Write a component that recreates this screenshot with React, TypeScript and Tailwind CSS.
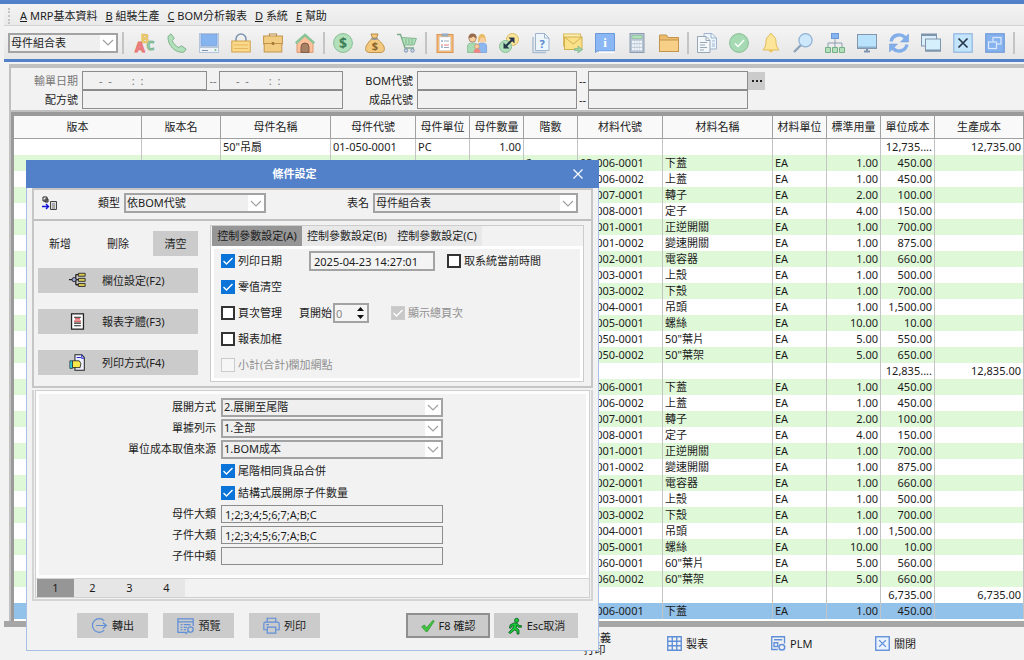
import { useState } from "react";
import type { ReactNode } from "react";

type Row = {
  name?: string;
  code?: string;
  unit?: string;
  qty?: string;
  level?: string;
  partCode?: string;
  partName?: string;
  partUnit?: string;
  usage?: string;
  unitCost?: string;
  total?: string;
};

const part = (partCode: string, partName: string, usage: string, unitCost: string): Row => ({
  level: "2",
  partCode,
  partName,
  partUnit: "EA",
  usage,
  unitCost,
});

const commonParts: Row[] = [
  part("03-006-0001", "下蓋", "1.00", "450.00"),
  part("03-006-0002", "上蓋", "1.00", "450.00"),
  part("03-007-0001", "轉子", "2.00", "100.00"),
  part("03-008-0001", "定子", "4.00", "150.00"),
  part("04-001-0001", "正逆開關", "1.00", "700.00"),
  part("04-001-0002", "變速開關", "1.00", "875.00"),
  part("04-002-0001", "電容器", "1.00", "660.00"),
  part("04-003-0001", "上殼", "1.00", "500.00"),
  part("04-003-0002", "下殼", "1.00", "700.00"),
  part("04-004-0001", "吊頭", "1.00", "1,500.00"),
  part("04-005-0001", "螺絲", "10.00", "10.00"),
];

const rows: Row[] = [
  { name: '50"吊扇', code: "01-050-0001", unit: "PC", qty: "1.00", unitCost: "12,735....", total: "12,735.00" },
  ...commonParts,
  part("03-050-0001", '50"葉片', "5.00", "550.00"),
  part("03-050-0002", '50"葉架', "5.00", "650.00"),
  { name: '60"吊扇', code: "01-060-0001", unit: "PC", qty: "1.00", unitCost: "12,835....", total: "12,835.00" },
  ...commonParts,
  part("03-060-0001", '60"葉片', "5.00", "560.00"),
  part("03-060-0002", '60"葉架', "5.00", "660.00"),
  { name: "馬達", code: "01-070-0001", unit: "PC", qty: "1.00", unitCost: "6,735.00", total: "6,735.00" },
  part("03-006-0001", "下蓋", "1.00", "450.00"),
];

const columns = [
  { label: "版本", w: "w-[128px]" },
  { label: "版本名", w: "w-[79px]" },
  { label: "母件名稱", w: "w-[110px]" },
  { label: "母件代號", w: "w-[85px]" },
  { label: "母件單位", w: "w-[54px]" },
  { label: "母件數量", w: "w-[54px]" },
  { label: "階數", w: "w-[54px]" },
  { label: "材料代號", w: "w-[85px]" },
  { label: "材料名稱", w: "w-[110px]" },
  { label: "材料單位", w: "w-[54px]" },
  { label: "標準用量", w: "w-[54px]" },
  { label: "單位成本", w: "w-[54px]" },
  { label: "生產成本", w: "" },
];

const menus = [
  ["A", "MRP基本資料"],
  ["B", "組裝生產"],
  ["C", "BOM分析報表"],
  ["D", "系統"],
  ["E", "幫助"],
];

const Svg = ({ children, size = "size-5" }: { children: ReactNode; size?: string }) => (
  <svg viewBox="0 0 20 20" className={`${size} shrink-0 overflow-visible`} fill="none" aria-hidden="true">
    {children}
  </svg>
);

const toolGroups: { label: string; icon: ReactNode }[][] = [
  [
    {
      label: "字型",
      icon: (
        <>
          <text x="6" y="9.500" fontSize="12" fontWeight="700" fill="#f7d77a" stroke="#d5ab42" strokeWidth=".6">B</text>
          <text x="11.500" y="17" fontSize="12" fontWeight="700" fill="#a5d8b0" stroke="#7fb58c" strokeWidth="1">C</text>
          <text x="0" y="19" fontSize="14" fontWeight="700" fill="#f08585" stroke="#e57373" strokeWidth="1">A</text>
        </>
      ),
    },
    {
      label: "電話",
      icon: <path d="M1 3.500 4 .8l3.200 4.400-2 2.400c1.200 3 3.400 5.400 6.600 7l2.600-1.800 4.800 3.200-2.400 3.200C8.500 20.400.5 12.500 1 3.500Z" fill="#b2e0bb" stroke="#76ae85" strokeWidth=".9" />,
    },
    {
      label: "電腦",
      icon: (
        <>
          <rect x=".5" y=".5" width="19" height="13" fill="#d7e2f0" stroke="#b6c6da" />
          <rect x="2" y="1.500" width="16" height="11" fill="#86b4f1" stroke="#6b98d8" strokeWidth=".6" />
          <rect x=".5" y="14.500" width="19" height="5" fill="#eef4fa" stroke="#b6c6da" />
          <path d="M3 17.500h6" stroke="#7f93aa" />
          <circle cx="16.500" cy="17" r="1" fill="#6bbb84" />
        </>
      ),
    },
    {
      label: "鎖定",
      icon: (
        <>
          <path d="M5 8.500V6a5 5 0 0 1 10 0v2.500" stroke="#7d93b0" strokeWidth="1.500" />
          <rect x=".8" y="8" width="18.400" height="11" fill="#fbd98b" stroke="#cfa14b" />
          <path d="M3 12h14M3 15.500h14" stroke="#e5b65c" />
        </>
      ),
    },
    {
      label: "公事包",
      icon: (
        <>
          <path d="M6.500 3V1h7v2" stroke="#b98a45" strokeWidth="1.200" />
          <rect x=".6" y="3" width="18.800" height="8" fill="#f2cc80" stroke="#c2944c" />
          <rect x="1.200" y="10.500" width="17.600" height="8.500" fill="#f2cc80" stroke="#c2944c" />
          <rect x="8.800" y="9" width="2.400" height="3" fill="#a97a38" />
        </>
      ),
    },
    {
      label: "首頁",
      icon: (
        <>
          <path d="M2 9v10.400h16V9L10 2.500Z" fill="#ffc19b" stroke="#d99a72" />
          <path d="M6 19.400V14a4 4 0 0 1 8 0v5.400Z" fill="#a88063" stroke="#805c45" />
          <path d="M.8 10.200 10 2l9.200 8.200" stroke="#8cc49a" strokeWidth="2.600" />
        </>
      ),
    },
  ],
  [
    {
      label: "收款",
      icon: (
        <>
          <circle cx="10" cy="10" r="9.400" fill="#b2e0bb" stroke="#86bd94" />
          <text x="10" y="15" fontSize="14" fontWeight="700" textAnchor="middle" fill="#3f7d57">$</text>
        </>
      ),
    },
    {
      label: "付款",
      icon: (
        <>
          <path d="M6 1h7l-1.500 4h-4Z" fill="#f3c97f" stroke="#b98a45" />
          <path d="M7 5.500h5c3 3 7.400 6.500 7.400 10 0 3-1.500 4-4.400 4H5c-3 0-4.500-1.500-4.400-4C.8 12 4 8.500 7 5.500Z" fill="#f3c97f" stroke="#c2944c" />
          <path d="M6 5.500c2.500 1.200 4.500 1.200 7 0" stroke="#8496ad" strokeWidth="1.200" />
          <text x="10" y="17" fontSize="11" fontWeight="700" textAnchor="middle" fill="#8a6329">$</text>
        </>
      ),
    },
    {
      label: "購物車",
      icon: (
        <>
          <path d="M0 1.500h3.500L8 15h9" stroke="#7aa887" strokeWidth="1.300" />
          <path d="M4.500 4.500 19.400 5.500 17 12H7.200Z" fill="#b2e0bb" stroke="#7fb58c" />
          <path d="M9 6v5M12 6v5M15 6v5" stroke="#7fb58c" />
          <circle cx="9" cy="17.500" r="1.700" fill="#cfdceb" stroke="#7d93b0" />
          <circle cx="15.500" cy="17.500" r="1.700" fill="#cfdceb" stroke="#7d93b0" />
        </>
      ),
    },
  ],
  [
    {
      label: "清單",
      icon: (
        <>
          <rect x="2" y="1.500" width="16" height="18" fill="#f7b978" stroke="#d99654" />
          <rect x="4.500" y="4" width="11" height="13.500" fill="#fff" stroke="#ccd5df" strokeWidth=".6" />
          <rect x="6.500" y=".5" width="7" height="3" fill="#9aabbd" />
          <path d="M6 8h2M6 14h2" stroke="#5d7fae" />
          <path d="M6 12h2m1 0h5" stroke="#e07878" />
          <path d="M9 8h5M9 14.500h5" stroke="#9aabbd" />
        </>
      ),
    },
    {
      label: "人員",
      icon: (
        <>
          <path d="M.5 19.500V13c0-2 1.500-3 5-3s5 1 5 3v6.500Z" fill="#a8dbb4" stroke="#7fb58c" strokeWidth=".7" />
          <path d="M10.500 19.500V13c0-2 1.500-3 4.500-3s4.600 1 4.600 3v6.500Z" fill="#8db8ef" stroke="#6b98d8" strokeWidth=".7" />
          <circle cx="5.500" cy="5.500" r="3.600" fill="#f9cfa2" stroke="#966b4e" strokeWidth=".7" />
          <path d="M1.500 5.500C1.500 1 4 .3 6 .5s4 1.500 3.600 5C8 5 7 4 6.500 3.500 5 4.500 3 5 1.500 5.500Z" fill="#966b4e" />
          <circle cx="15" cy="6" r="3.400" fill="#f9cfa2" />
          <path d="M11 10c0-6 1-9 4-9s4 3 4 9c-1.500-2-1.500-4-1.500-5.500h-4C13 7 13 8 11 10Z" fill="#e8bb62" />
          <path d="M6.500 19.700c0-3 1-4 3.500-4s3.500 1 3.500 4Z" fill="#f08585" />
          <circle cx="10" cy="13.500" r="2.400" fill="#f9cfa2" stroke="#b98060" strokeWidth=".6" />
        </>
      ),
    },
    {
      label: "轉換",
      icon: (
        <>
          <circle cx="13.500" cy="6.500" r="6" fill="#fbe59a" stroke="#d8bb5e" />
          <circle cx="6.500" cy="13.500" r="6" fill="#b2e0bb" stroke="#86bd94" />
          <path d="m6 14 8-8" stroke="#26374a" strokeWidth="2.200" />
          <path d="M9.500 4.500H15.500V10.500ZM10.500 15.500H4.500V9.500Z" fill="#26374a" />
        </>
      ),
    },
    {
      label: "說明",
      icon: (
        <>
          <path d="M2 4v15.500h13" stroke="#a9bdd2" strokeWidth="1.400" />
          <path d="M4.500.5h9L18 5v12.500H4.500Z" fill="#edf6fd" stroke="#9db4cc" />
          <path d="M13.500.5V5H18" stroke="#9db4cc" />
          <text x="11" y="14.500" fontSize="11" fontWeight="700" textAnchor="middle" fill="#5286cc">?</text>
        </>
      ),
    },
    {
      label: "郵件",
      icon: (
        <>
          <rect x=".5" y="1" width="17" height="12" fill="#fdeeb1" stroke="#d8bb5e" />
          <rect x="1.500" y="4" width="17.500" height="12.500" fill="#fbe08a" stroke="#d0b04f" />
          <path d="m1.500 4 8.700 7L19 4" stroke="#d0b04f" />
          <path d="M11.500 15.500H15V13l4.600 3.600L15 20v-2.500h-3.500Z" fill="#9ad0a6" stroke="#76ae85" strokeWidth=".6" />
        </>
      ),
    },
    {
      label: "資訊",
      icon: (
        <>
          <path d="M.5.5h19V18H7l-5 0L.5 19.500Z" fill="#8bb7f5" stroke="#6b98d8" />
          <path d="M4 19.200h15.500" stroke="#fff" strokeWidth="1.500" />
          <text x="10" y="13.500" fontSize="13" fontWeight="700" textAnchor="middle" fill="#fff" fontFamily="Liberation Serif">i</text>
        </>
      ),
    },
    {
      label: "計算機",
      icon: (
        <>
          <rect x="3" y=".5" width="14" height="19" fill="#b7c4d3" stroke="#8d9db0" />
          <rect x="5" y="2.500" width="10" height="3" fill="#b5e3b9" stroke="#86bd94" strokeWidth=".6" />
          <path d="M5 9h10M5 12.500h10M5 16h10" stroke="#eef4fa" strokeWidth="2.400" strokeDasharray="2.200 .4" />
        </>
      ),
    },
    {
      label: "資料夾",
      icon: (
        <>
          <path d="M.5 18.500V2h7l1.500 2.500h10.500v14Z" fill="#ecbb6c" stroke="#c2944c" />
          <path d="M.5 18.500V7h19v11.500Z" fill="#f7cf87" stroke="#c2944c" />
        </>
      ),
    },
  ],
  [
    {
      label: "複製",
      icon: (
        <>
          <path d="M7 .5h8L19.500 5v11H7Z" fill="#edf6fd" stroke="#9db4cc" />
          <path d="M14 .5V5h5M15 8h3M15 11h3M15 13h3" stroke="#9db4cc" />
          <path d="M.5 3.500H9L13 7.500v12H.5Z" fill="#f4f7fa" stroke="#98a7b8" />
          <path d="M9 3.500v4h4M3 9.500h7M3 12h5M3 14.500h7M3 17h4" stroke="#98a7b8" />
        </>
      ),
    },
    {
      label: "核准",
      icon: (
        <>
          <circle cx="10" cy="10" r="9.400" fill="#a6dab2" stroke="#86bd94" />
          <path d="m6 10.500 3 3 6-6.500" stroke="#fff" strokeWidth="1.500" />
        </>
      ),
    },
    {
      label: "通知",
      icon: (
        <>
          <circle cx="10" cy="17.500" r="2" fill="#f1c765" />
          <path d="M10 .6c1.200 0 1.600 1 1.600 1.800C14.500 4 15 6.500 15 9c0 3 .6 5 3 8H2c2.400-3 3-5 3-8 0-2.500.5-5 3.400-6.600C8.400 1.600 8.800.6 10 .6Z" fill="#fde69a" stroke="#e0bb58" />
        </>
      ),
    },
    {
      label: "搜尋",
      icon: (
        <>
          <path d="m1 19 7-7" stroke="#8fa2b8" strokeWidth="2.400" />
          <circle cx="12.500" cy="7.300" r="6.600" fill="#cde8fb" stroke="#8fb0d4" strokeWidth="1.200" />
        </>
      ),
    },
    {
      label: "組織",
      icon: (
        <>
          <path d="M10 5v10M3 15v-5h14v5" stroke="#8d9db0" />
          <rect x="6.500" y=".5" width="7" height="5" fill="#86b4f1" stroke="#6b98d8" />
          <path d="M.5 14.500h5v5h-5ZM7.500 14.500h5v5h-5ZM14.500 14.500h5v5h-5Z" fill="#b2e0bb" stroke="#76ae85" />
        </>
      ),
    },
    {
      label: "螢幕",
      icon: (
        <>
          <path d="M7 18.500h6M10 15v3" stroke="#7d93b0" strokeWidth="2" />
          <rect x=".5" y="1.500" width="19" height="14" fill="#8db0cc" stroke="#8398ad" />
          <rect x="1" y="2" width="18" height="11.500" fill="#b9e2fc" />
        </>
      ),
    },
    {
      label: "重新整理",
      icon: (
        <>
          <path d="M2 8.500A8.200 8.200 0 0 1 16 4.500M18 11.500A8.200 8.200 0 0 1 4 15.500" stroke="#82aeea" strokeWidth="3.400" />
          <path d="M19.500 1v8h-8ZM.5 19v-8h8Z" fill="#82aeea" stroke="#6b98d8" strokeWidth=".5" />
        </>
      ),
    },
    {
      label: "視窗",
      icon: (
        <>
          <rect x=".5" y="1" width="15" height="12" fill="#dceefb" stroke="#7f95ac" />
          <rect x="4.500" y="6" width="15" height="12" fill="#d5effd" stroke="#7f95ac" />
          <path d="M.5 2h15M4.500 17.500h15" stroke="#7f95ac" strokeWidth="2" />
        </>
      ),
    },
    {
      label: "關閉視窗",
      icon: (
        <>
          <rect x=".8" y=".8" width="18.400" height="18.400" fill="#c3e5fb" stroke="#8fb5e0" strokeWidth="1.200" />
          <path d="m5.500 5.500 9 9m0-9-9 9" stroke="#26374a" strokeWidth="1.700" />
        </>
      ),
    },
    {
      label: "切換視窗",
      icon: (
        <>
          <rect x=".8" y=".8" width="18.400" height="18.400" fill="#86b2ee" stroke="#6b98d8" strokeWidth="1.200" />
          <rect x="8" y="4.500" width="8" height="6.500" stroke="#dbe9fb" strokeWidth="1.200" />
          <rect x="3.500" y="9" width="8" height="6.500" fill="#86b2ee" stroke="#dbe9fb" strokeWidth="1.200" />
        </>
      ),
    },
  ],
];

const BLUE = "#5f8fd8";

const bottomItems: { label: string; icon: ReactNode }[] = [
  { label: "速查", icon: <path d="M2 18 8 12M7 8a5 5 0 1 0 10 0 5 5 0 0 0-10 0" stroke={BLUE} strokeWidth="1.500" /> },
  { label: "新增", icon: <path d="M10 2v16M2 10h16" stroke={BLUE} strokeWidth="1.500" /> },
  { label: "預覽", icon: <path d="M2 2h16v13H2Zm0 4h16" stroke={BLUE} strokeWidth="1.500" /> },
  { label: "轉出", icon: <path d="M2 10h15m-5-5 5 5-5 5" stroke={BLUE} strokeWidth="1.500" /> },
  { label: "列印", icon: <path d="M5 7V2h10v5M2 7h16v8H2Zm3 5h10v6H5Z" stroke={BLUE} strokeWidth="1.500" /> },
  { label: "自定義打印", icon: <path d="M5 7V2h10v5M2 7h16v8H2Zm3 5h10v6H5Z" stroke={BLUE} strokeWidth="1.500" /> },
  {
    label: "製表",
    icon: <path d="M1 1h18v18H1ZM1 7h18M1 13h18M7 1v18M13 1v18" stroke={BLUE} strokeWidth="1.800" />,
  },
  {
    label: "PLM",
    icon: (
      <>
        <path d="M9 18H1V1h17v9M4 5h11M4 9h5v5H4Z" stroke={BLUE} strokeWidth="1.800" />
        <circle cx="14.500" cy="15" r="3.800" stroke={BLUE} strokeWidth="2" />
      </>
    ),
  },
  {
    label: "關閉",
    icon: (
      <>
        <rect x="1" y="1" width="18" height="18" fill="#eaf3fd" stroke={BLUE} strokeWidth="1.800" />
        <path d="m5.500 5.500 9 9m0-9-9 9" stroke={BLUE} strokeWidth="1.800" />
      </>
    ),
  },
];

function Combo({ value, label, id, className = "", h = "h-5" }: { value: string; label?: string; id: string; className?: string; h?: string }) {
  return (
    <div className={`relative ${className}`}>
      <select
        id={id}
        aria-label={label}
        className={`block ${h} w-full appearance-none border-2 border-[#a3a3a3] bg-[#efefef] pl-px pr-5 leading-[14px] outline-none`}
      >
        <option>{value}</option>
      </select>
      <span className="pointer-events-none absolute inset-y-[2px] right-[2px] flex w-4 items-center justify-center bg-white">
        <svg viewBox="0 0 12 7" className="h-[7px] w-3" fill="none">
          <path d="m1 1 5 5 5-5" stroke="#a0a0a0" strokeWidth="1.200" />
        </svg>
      </span>
    </div>
  );
}

function Check({ label, on = false, disabled = false }: { label: string; on?: boolean; disabled?: boolean }) {
  const [checked, setChecked] = useState(on);
  return (
    <label className={`flex h-[14px] items-center gap-[3px] whitespace-nowrap ${disabled ? "text-[#8f8f8f]" : ""}`}>
      <span className="relative size-[14px]">
        <input
          type="checkbox"
          checked={checked}
          disabled={disabled}
          onChange={(e) => setChecked(e.target.checked)}
          className="block size-[14px] appearance-none border-2 border-[#333] bg-white checked:border-[#0a74d8] checked:bg-[#0a74d8] disabled:border disabled:border-[#ccc] disabled:bg-[#f6f6f6] disabled:checked:bg-[#c8c8c8]"
        />
        {checked && (
          <svg viewBox="0 0 14 14" className="pointer-events-none absolute inset-0" fill="none">
            <path d="m2.500 7 3 3 6-6" stroke="#fff" strokeWidth="1.400" />
          </svg>
        )}
      </span>
      {label}
    </label>
  );
}

const cell = "overflow-hidden whitespace-nowrap border-r border-[#c4c4c4] px-[2px] py-0";

function rowColor(r: Row, i: number) {
  if (i === rows.length - 1) return "bg-[#92c1e9]";
  return r.partCode && i % 2 === 1 ? "bg-[#dff9d8]" : "bg-white";
}

function DataGrid() {
  return (
    <div className="flex-1 overflow-hidden border-l-[3px] border-t-4 border-[#9a9a9a] bg-white">
      <table className="w-full table-fixed border-separate border-spacing-0">
        <colgroup>
          {columns.map((c) => (
            <col key={c.label} className={c.w} />
          ))}
        </colgroup>
        <thead>
          <tr className="h-[23px] bg-[#f9f9f9]">
            {columns.map((c) => (
              <th key={c.label} className="overflow-hidden whitespace-nowrap border-b border-r border-[#a0a0a0] p-0 font-normal">
                {c.label}
              </th>
            ))}
          </tr>
        </thead>
        <tbody>
          {rows.map((r, i) => (
            <tr key={i} className={`h-4 leading-4 ${rowColor(r, i)}`}>
              <td className={cell}></td>
              <td className={cell}></td>
              <td className={cell}>{r.name}</td>
              <td className={cell}>{r.code}</td>
              <td className={cell}>{r.unit}</td>
              <td className={`${cell} text-right`}>{r.qty}</td>
              <td className={cell}>{r.level}</td>
              <td className={cell}>{r.partCode}</td>
              <td className={cell}>{r.partName}</td>
              <td className={cell}>{r.partUnit}</td>
              <td className={`${cell} text-right`}>{r.usage}</td>
              <td className={`${cell} text-right`}>{r.unitCost}</td>
              <td className={`${cell} text-right`}>{r.total}</td>
            </tr>
          ))}
        </tbody>
      </table>
    </div>
  );
}

const filterBox = "block h-[19px] min-w-0 border border-[#8c8c8c] bg-[#f1f1f1] px-4 outline-none";

function Filters() {
  return (
    <div className="flex h-12 shrink-0 items-start border-b-2 border-t-4 border-[#c0c0c0] bg-[#f2f2f2] pt-[3px]">
      <div className="flex w-[332px] flex-col">
        <div className="flex h-[19px] items-center">
          <label htmlFor="date1" className="w-[71px] shrink-0 pr-1 text-right text-[#777]">輸單日期</label>
          <input id="date1" readOnly value="-  -       :  :" className={`${filterBox} w-[125px] text-[#777]`} />
          <span className="w-3 text-center text-[#777]">--</span>
          <input aria-label="輸單日期迄" readOnly value="-  -       :  :" className={`${filterBox} w-[124px] text-[#777]`} />
        </div>
        <div className="flex h-[19px] items-center">
          <label htmlFor="formula" className="w-[71px] shrink-0 pr-1 text-right">配方號</label>
          <input id="formula" className={`${filterBox} flex-1`} />
        </div>
      </div>
      <div className="flex flex-col">
        {["BOM代號", "成品代號"].map((t, i) => (
          <div key={t} className="flex h-[19px] items-center">
            <label htmlFor={`range${i}`} className="w-[74px] pr-1 text-right">{t}</label>
            <input id={`range${i}`} className={`${filterBox} w-40`} />
            <span className="w-[11px] text-center">--</span>
            <input aria-label={`${t}迄`} className={`${filterBox} w-40`} />
            {i === 0 && (
              <button type="button" className="flex h-[18px] w-[17px] items-center justify-center bg-[#cbcbcb]" aria-label="選擇">
                <svg viewBox="0 0 10 2" className="h-[2px] w-[10px]">
                  <path d="M0 0h2v2H0zM4 0h2v2H4zM8 0h2v2H8z" fill="#222" />
                </svg>
              </button>
            )}
          </div>
        ))}
      </div>
    </div>
  );
}

const sideButtons: { label: string; icon: ReactNode }[] = [
  {
    label: "欄位設定(F2)",
    icon: (
      <>
        <path d="M0 9h8M8 3v12M8 3h5M8 9h5M8 15h5" stroke="#222" strokeWidth="1.500" />
        <circle cx="6" cy="9" r="2.500" fill="#9aa0d0" stroke="#222" />
        <path d="M11 1.500h8v3.500h-8ZM11 7.500h8V11h-8ZM11 13.500h8V17h-8Z" fill="#d8ca52" stroke="#222" />
      </>
    ),
  },
  {
    label: "報表字體(F3)",
    icon: (
      <>
        <rect x="3" y="1" width="14" height="18" fill="#fff" stroke="#222" strokeWidth="1.500" />
        <path d="M6 5h8M6 12h8M6 15h8" stroke="#222" strokeWidth="1.400" />
        <path d="M7 7h6M6 9.500h8" stroke="#d03030" strokeWidth="1.400" />
      </>
    ),
  },
  {
    label: "列印方式(F4)",
    icon: (
      <>
        <path d="M7 1h8l3 3v15H7Z" fill="#eef0ff" stroke="#222" strokeWidth="1.200" />
        <path d="M9 4h5M15 1v4h3" stroke="#2b2bd0" strokeWidth="1.200" />
        <path d="M4 8h8l2 3-1 5H4Z" fill="#f7e94a" stroke="#222" />
        <path d="M1 8h3v9H1Z" fill="#35d6e0" stroke="#222" strokeWidth=".8" />
      </>
    ),
  },
];

const grayBtn = "flex h-[25px] items-center justify-center bg-[#cbcbcb]";
const field = "block h-[18px] w-full border border-[#8c8c8c] bg-[#f1f1f1] px-[3px] outline-none";

function ConditionDialog() {
  const [tab, setTab] = useState("A");
  const [page, setPage] = useState(1);

  return (
    <section role="dialog" aria-label="條件設定" className="absolute left-[26px] top-39 w-[573px] border border-[#a9c0e6] bg-[#f2f2f2]">
      <header className="-mx-px -mt-px flex h-7 items-center bg-[#5281ca] text-white">
        <h2 className="flex-1 text-center font-bold">條件設定</h2>
        <button type="button" aria-label="關閉" className="flex w-9 items-center justify-center pr-[6px]">
          <svg viewBox="0 0 10 10" className="size-[10px]">
            <path d="m.5.5 9 9m0-9-9 9" stroke="#fff" strokeWidth="1.200" />
          </svg>
        </button>
      </header>

      <div className="mx-[5px] border-2 border-[#c6c6c6] bg-[#f2f2f2]">
        <div className="flex h-[31px] items-center border-b-2 border-[#c0c0c0] pb-[3px]">
          <svg viewBox="0 0 16 14" className="ml-2 h-[14px] w-4" fill="none" aria-hidden="true">
            <path d="M1 1h4v4H1ZM3 3h3v3H3Z" fill="#fff" stroke="#222" />
            <path d="M8.500 5.500h6v8h-6Z" fill="#ddd" stroke="#444" />
            <path d="M10 8h3M10 10h3M10 12h3" stroke="#777" />
            <path d="M0 10.500h6M4 8l2.500 2.500L4 13" stroke="#1414e0" strokeWidth="1.400" />
          </svg>
          <label htmlFor="kind" className="ml-10 w-[26px]">類型</label>
          <Combo id="kind" value="依BOM代號" className="w-[142px]" />
          <label htmlFor="tableName" className="ml-[81px] w-[26px]">表名</label>
          <Combo id="tableName" value="母件組合表" className="w-[205px]" />
        </div>

        <div className="flex h-[165px] pl-1 pr-[7px] pt-1">
          <div className="flex w-[172px] flex-col gap-4 pt-[6px]">
            <div className="flex w-[160px]">
              <button type="button" className="h-[25px] w-[44px]">新增</button>
              <button type="button" className="ml-[14px] h-[25px] w-[44px]">刪除</button>
              <button type="button" className={`${grayBtn} ml-auto w-[45px]`}>清空</button>
            </div>
            <div className="-mt-1 flex flex-col gap-4">
              {sideButtons.map((b) => (
                <button key={b.label} type="button" className={`${grayBtn} w-[160px] !justify-start gap-4 pl-[31px]`}>
                  <Svg size="size-[17px]">{b.icon}</Svg>
                  {b.label}
                </button>
              ))}
            </div>
          </div>

          <div className="flex h-[157px] flex-1 flex-col border border-[#ccc]">
            <div role="tablist" className="flex h-5 items-stretch pl-px">
              {["A", "B", "C"].map((t) => (
                <button
                  key={t}
                  type="button"
                  role="tab"
                  aria-selected={tab === t}
                  onClick={() => setTab(t)}
                  className={`w-[90px] whitespace-nowrap ${tab === t ? "bg-[#969696]" : "bg-[#e8e8e8]"}`}
                >
                  控制參數設定({t})
                </button>
              ))}
            </div>
            <div className="flex flex-1 flex-col gap-3 border-[3px] border-white bg-[#f2f2f2] pl-[7px] pt-[5px]">
              <div className="flex h-[14px] items-center">
                <div className="w-[88px]"><Check label="列印日期" on /></div>
                <input aria-label="列印日期時間" defaultValue="2025-04-23 14:27:01" className="h-5 w-[126px] border-2 border-[#a3a3a3] bg-[#f4f4f4] px-[3px] outline-none" />
                <div className="ml-3"><Check label="取系統當前時間" /></div>
              </div>
              <Check label="零值清空" on />
              <div className="flex h-[14px] items-center">
                <div className="w-[78px]"><Check label="頁次管理" /></div>
                <label htmlFor="pageStart" className="w-[34px]">頁開始</label>
                <div className="relative">
                  <input id="pageStart" type="text" inputMode="numeric" defaultValue="0" className="block h-5 w-9 border-2 border-[#a3a3a3] bg-[#f4f4f4] px-px text-[#888] outline-none" />
                  <svg viewBox="0 0 7 12" className="pointer-events-none absolute right-[5px] top-1 h-3 w-[7px]">
                    <path d="M0 4 3.500 0 7 4ZM0 8l3.500 4L7 8Z" fill="#111" />
                  </svg>
                </div>
                <div className="ml-[22px]"><Check label="顯示總頁次" on disabled /></div>
              </div>
              <Check label="報表加框" />
              <Check label="小計(合計)欄加網點" disabled />
            </div>
          </div>
        </div>
      </div>

      <div className="mx-[5px] mt-[2px] border-2 border-t-0 border-[#d4d4d4] px-px pb-px">
        <div className="border border-[#cfcfcf]">
          <div className="flex h-[187px] flex-col gap-[3px] border-[3px] border-[#fdfdfd] bg-[#f2f2f2] pt-1">
            {[
              ["展開方式", "2.展開至尾階"],
              ["單據列示", "1.全部"],
              ["單位成本取值來源", "1.BOM成本"],
            ].map(([l, v]) => (
              <div key={l} className="flex h-[18px] items-center">
                <label htmlFor={l} className="w-[182px] pr-[5px] text-right">{l}</label>
                <Combo id={l} value={v} h="h-[19px]" className="w-[222px]" />
              </div>
            ))}
            <div className="flex h-[19px] items-center pl-[182px]"><Check label="尾階相同貨品合併" on /></div>
            <div className="flex h-[19px] items-center pl-[182px]"><Check label="結構式展開原子件數量" on /></div>
            {[
              ["母件大類", "1;2;3;4;5;6;7;A;B;C"],
              ["子件大類", "1;2;3;4;5;6;7;A;B;C"],
              ["子件中類", ""],
            ].map(([l, v]) => (
              <div key={l} className="flex h-[18px] items-center">
                <label htmlFor={l} className="w-[182px] pr-[5px] text-right">{l}</label>
                <div className="w-[222px]"><input id={l} defaultValue={v} className={field} /></div>
              </div>
            ))}
          </div>
          <div role="tablist" className="flex h-[19px] border-t border-[#d4d4d4] pl-px">
            {[1, 2, 3, 4].map((p) => (
              <button
                key={p}
                type="button"
                role="tab"
                aria-selected={page === p}
                onClick={() => setPage(p)}
                className={`w-[37px] ${page === p ? "bg-[#969696]" : "bg-[#e6e6e6]"}`}
              >
                {p}
              </button>
            ))}
          </div>
        </div>
      </div>

      <footer className="flex items-center gap-[15px] pb-3 pl-[50px] pr-5 pt-3">
        <button type="button" className={`${grayBtn} w-[71px] gap-1`}>
          <Svg size="size-[17px]">
            <path d="M15.500 4.500a8 8 0 1 0 0 11M6 10h12m-4-3.500 4 3.500-4 3.500" stroke={BLUE} strokeWidth="1.400" />
          </Svg>
          轉出
        </button>
        <button type="button" className={`${grayBtn} w-[71px] gap-1`}>
          <Svg size="size-[18px]">
            <path d="M10 17H1V2h17v8M1 5.500h17M4 8.500h2m1.500 0H15M4 11.500h2m1.500 0H11M4 14h2m1.500 0H10" stroke={BLUE} strokeWidth="1.400" />
            <circle cx="15" cy="14" r="3" stroke={BLUE} strokeWidth="1.400" />
            <path d="m12.500 16-3 3" stroke={BLUE} strokeWidth="1.400" />
          </Svg>
          預覽
        </button>
        <button type="button" className={`${grayBtn} w-[71px] gap-1`}>
          <Svg size="size-[17px]">
            <path d="M5 6V1.500h10V6M5 15H1V8a2 2 0 0 1 2-2h14a2 2 0 0 1 2 2v7h-4M5 12h10v7H5ZM4 9h3" stroke={BLUE} strokeWidth="1.400" />
          </Svg>
          列印
        </button>
        <div className="ml-auto flex gap-1">
          <button type="button" className={`${grayBtn} w-[84px] gap-1 border-2 border-[#8f8f8f]`}>
            <Svg size="size-[14px]">
              <path d="m1 11 4-2.500 3 4L17 2l2 1L9 18H7Z" fill="#3fc63f" stroke="#2a8f2a" />
            </Svg>
            F8 確認
          </button>
          <button type="button" className={`${grayBtn} w-[84px] gap-1`}>
            <Svg size="size-[16px]">
              <circle cx="12" cy="3" r="2.600" fill="#18c93a" stroke="#0a5a1c" />
              <path d="m9 6-5 2.500-1 4 1.800.5 1-3 2.200-.8L7 13l-5 5 1.800 1.500L9.500 15l3 1.500V20h2.500v-5l-3.500-3 .8-3 1.700 2.500H18V9.500h-3L13 6.500Z" fill="#18c93a" stroke="#0a5a1c" />
            </Svg>
            Esc取消
          </button>
        </div>
      </footer>
    </section>
  );
}

export default function App() {
  return (
    <main className="relative flex min-h-screen flex-col overflow-hidden border-t-4 border-[#5281ca] bg-[#f2f2f2] font-['Noto_Sans','Noto_Sans_CJK_TC',sans-serif] text-[11px] leading-[14px] text-[#1c1c1c]">
      <div className="flex flex-1 flex-col pl-1">
        <nav className="flex h-[22px] items-center gap-2 border-b border-[#d4d4d4] bg-gradient-to-b from-[#f4f4f4] to-[#e9e9e9] pl-1 pt-[2px]">
          <span className="h-4 w-1 border-l-2 border-dotted border-[#c4c4c4]"></span>
          <div className="flex gap-2 whitespace-nowrap">
            {menus.map(([k, t]) => (
              <a key={k} href="#">
                <u>{k}</u> {t}
              </a>
            ))}
          </div>
        </nav>

        <div className="flex h-[33px] items-center overflow-hidden bg-gradient-to-b from-[#f4f4f4] to-[#e6e6e6] pl-1">
          <Combo id="report" label="報表" value="母件組合表" className="w-[110px] shrink-0" />
          <span className="ml-1 mr-[5px] h-[22px] w-[2px] shrink-0 bg-[#c4c4c4]"></span>
          {toolGroups.map((g, i) => (
            <div key={i} className="flex shrink-0 items-center">
              {g.map((t) => (
                <button key={t.label} type="button" aria-label={t.label} className="flex w-8 justify-center">
                  <Svg>{t.icon}</Svg>
                </button>
              ))}
              <span className="mx-[2px] h-[22px] w-[2px] bg-[#c4c4c4]"></span>
            </div>
          ))}
        </div>
        <div className="h-[3px] shrink-0 bg-[#5281ca]"></div>

        <div className="mt-[2px] flex flex-1 flex-col pl-[5px]">
          <div className="flex flex-1 flex-col border-l-2 border-[#c0c0c0]">
            <Filters />
            <DataGrid />
          </div>
        </div>

        <footer className="flex h-[39px] shrink-0 items-center border-t-[6px] border-[#a6a6a6] pl-[39px]">
          {bottomItems.map((b) => (
            <button
              key={b.label}
              type="button"
              className={`flex w-[104px] shrink-0 items-center text-left ${b.label.length > 4 ? "gap-0" : "gap-1"}`}
            >
              <Svg size="size-[15px]">{b.icon}</Svg>
              <span className={b.label.length > 4 ? "w-[33px] text-center leading-3" : ""}>{b.label}</span>
            </button>
          ))}
        </footer>
      </div>

      <ConditionDialog />
    </main>
  );
}
